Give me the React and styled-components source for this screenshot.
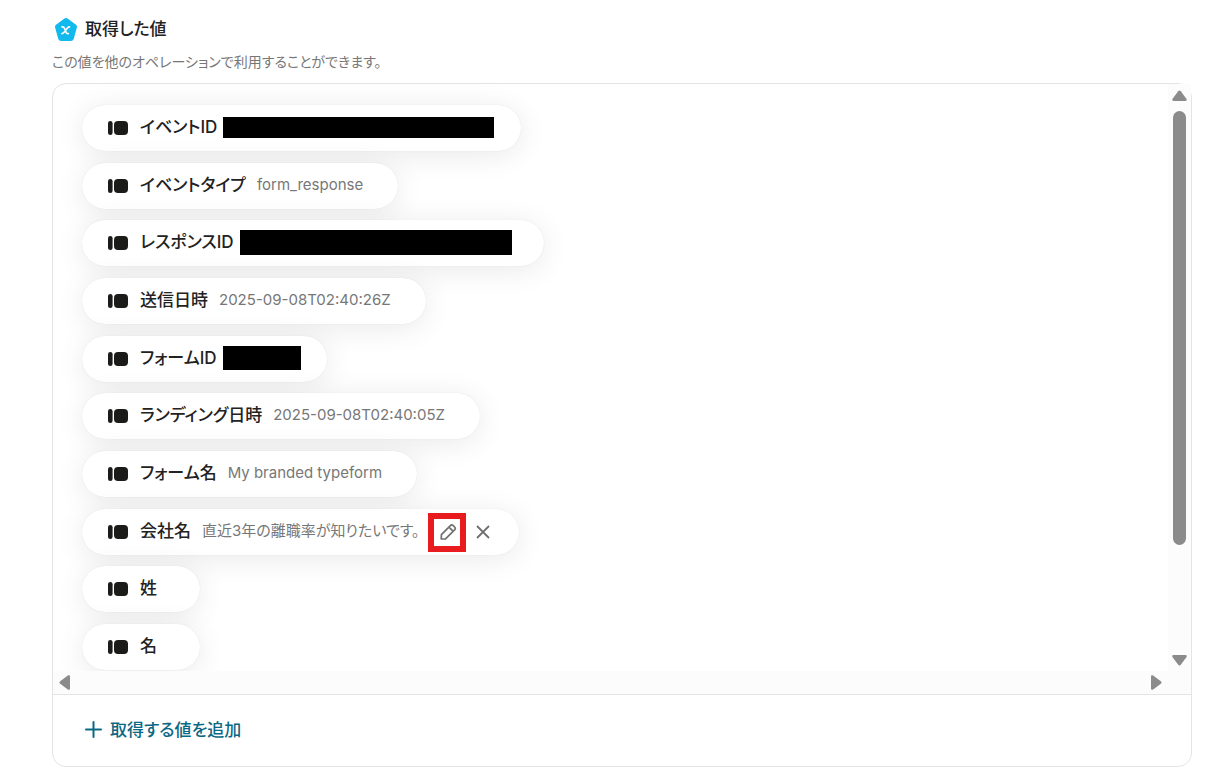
import React from "react";
import styled, { createGlobalStyle } from "styled-components";

const GlobalStyle = createGlobalStyle`
  * {
    box-sizing: border-box;
  }

  body {
    margin: 0;
    background: #fff;
    color: #222;
    font-family: Inter, "Noto Sans CJK JP", sans-serif;
    font-feature-settings: "palt";
  }
`;

const Page = styled.main`
  padding: 16px 27px 17px 52px;
`;

const Header = styled.header`
  display: flex;
  align-items: center;
  gap: 7px;
  height: 26px;
  padding-left: 2px;
`;

const Title = styled.h1`
  margin: 0;
  font-size: 17px;
  line-height: 26px;
  font-weight: 500;
`;

const Description = styled.p`
  margin: 10px 0 11px;
  color: #777;
  font-size: 14px;
  line-height: 20px;
`;

const Panel = styled.section`
  border: 1px solid #e4e4e4;
  border-radius: 14px;
`;

const Scroller = styled.div`
  display: grid;
  grid-template-columns: 1fr 23px;
  grid-template-rows: 587px 23px;
`;

const List = styled.ul`
  display: flex;
  flex-direction: column;
  align-items: flex-start;
  justify-content: space-between;
  min-width: 0;
  margin: 0;
  padding: 21px 29px 1px;
  overflow: hidden;
  list-style: none;
`;

const Pill = styled.li`
  display: flex;
  align-items: center;
  height: 46px;
  padding: 0 33px 0 26px;
  border-radius: 23px;
  background: #fff;
  box-shadow: 0 0 1px rgba(0, 0, 0, 0.12), 0 4px 30px rgba(0, 0, 0, 0.09);
  white-space: nowrap;
`;

const Label = styled.span`
  margin: 0 10px 2px 12px;
  font-size: 17px;
  line-height: 26px;
  font-weight: 500;
`;

const Value = styled.span`
  margin: 0 2px 2px 1px;
  color: #777;
  font-size: 15px;
  line-height: 24px;
`;

const Hidden = styled.span`
  position: relative;
  width: ${({ $space }) => $space}px;
  height: ${({ $height }) => $height}px;
  margin-bottom: 2px;

  &::after {
    content: "";
    position: absolute;
    top: 0;
    left: -4px;
    width: ${({ $width }) => $width}px;
    height: 100%;
    background: #000;
  }
`;

const Actions = styled.span`
  display: flex;
  align-items: center;
  gap: 11px;
  margin: 0 -9px 0 15px;
`;

const IconButton = styled.button`
  position: relative;
  display: grid;
  place-items: center;
  width: 24px;
  height: 24px;
  padding: 0;
  border: none;
  background: none;
  color: #707070;
  cursor: pointer;
`;

const Marker = styled.span`
  position: absolute;
  top: -7px;
  left: -8px;
  width: 38px;
  height: 39px;
  border: 6px solid #e81b1f;
  pointer-events: none;
`;

const Track = styled.div`
  display: flex;
  flex-direction: ${({ $vertical }) => ($vertical ? "column" : "row")};
  align-items: center;
  gap: 10px;
  padding: ${({ $vertical }) => ($vertical ? "6px 0 5px" : "0 6px")};
  background: #fcfcfc;
  color: #8b8b8b;

  svg:last-child {
    margin-${({ $vertical }) => ($vertical ? "top" : "left")}: auto;
  }
`;

const Thumb = styled.div`
  width: 13px;
  height: 434px;
  border-radius: 7px;
  background: #8b8b8b;
`;

const Corner = styled.div`
  background: #fcfcfc;
`;

const Footer = styled.footer`
  display: flex;
  align-items: center;
  height: 72px;
  padding: 0 32px 2px;
  border-top: 1px solid #e4e4e4;
`;

const AddButton = styled.button`
  display: flex;
  align-items: center;
  gap: 8px;
  padding: 0;
  border: none;
  background: none;
  color: #0b6884;
  font: inherit;
  font-feature-settings: inherit;
  font-size: 17px;
  line-height: 26px;
  font-weight: 500;
  cursor: pointer;
`;

const items = [
  { label: "イベントID", hidden: { space: 261, width: 271, height: 21 } },
  { label: "イベントタイプ", value: "form_response" },
  { label: "レスポンスID", hidden: { space: 267, width: 272, height: 25 } },
  { label: "送信日時", value: "2025-09-08T02:40:26Z" },
  { label: "フォームID", hidden: { space: 67, width: 78, height: 24 } },
  { label: "ランディング日時", value: "2025-09-08T02:40:05Z" },
  { label: "フォーム名", value: "My branded typeform" },
  { label: "会社名", value: "直近3年の離職率が知りたいです。", active: true },
  { label: "姓" },
  { label: "名" },
];

function VariableIcon() {
  return (
    <svg width="24" height="24" viewBox="0 -1 24 24" aria-hidden="true">
      <path
        d="M10.4.6a3 3 0 0 1 3.2 0l8.400 6.100a2.600 2.600 0 0 1 .9 2.900l-3.200 11.400a3 3 0 0 1-2.800 2H7.100a3 3 0 0 1-2.800-2L1.100 9.600A2.600 2.600 0 0 1 2 6.700z"
        fill="#12b9ec"
      />
      <path
        d="M8 8.900h.8c.8 0 1.200.4 1.500 1.100l1.900 4.500c.3.700.7 1.100 1.500 1.100h.7M15.600 8.900c-1 0-1.500.3-2.100 1l-3.600 4.700c-.6.700-1.100 1-2.100 1"
        fill="none"
        stroke="#fff"
        strokeWidth="1.600"
        strokeLinecap="round"
      />
    </svg>
  );
}

function FormIcon() {
  return (
    <svg width="20" height="14" viewBox="0 0 20 14" aria-hidden="true">
      <rect width="4.600" height="14" rx="2.300" fill="#1b1b19" />
      <rect x="6" width="14" height="14" rx="4" fill="#1b1b19" />
    </svg>
  );
}

function PencilIcon() {
  return (
    <svg
      width="18"
      height="18"
      viewBox="0 0 18 18"
      fill="none"
      stroke="currentColor"
      strokeWidth="1.700"
      strokeLinejoin="round"
      aria-hidden="true"
    >
      <path d="M2.200 16l.2-4.300 9-9.100a2 2 0 0 1 2.800 0l1.400 1.400a2 2 0 0 1 0 2.800l-9.100 9zM10 4.200l3.900 3.900" />
    </svg>
  );
}

function CloseIcon() {
  return (
    <svg width="14" height="14" viewBox="0 0 14 14" aria-hidden="true">
      <path d="M1 1l12 12M13 1L1 13" stroke="currentColor" strokeWidth="1.800" />
    </svg>
  );
}

function PlusIcon() {
  return (
    <svg width="17" height="17" viewBox="0 0 17 17" aria-hidden="true">
      <path
        d="M8.500 1v15M1 8.500h15"
        stroke="currentColor"
        strokeWidth="2"
        strokeLinecap="round"
      />
    </svg>
  );
}

function Arrow({ direction }) {
  const shapes = {
    up: "M6.200 1.200a1.700 1.700 0 0 1 2.600 0l5.600 7.600c.7 1 .3 2.200-1 2.200H1.600C.3 11-.1 9.800.6 8.800z",
    down: "M6.200 9.800a1.700 1.700 0 0 0 2.600 0l5.600-7.600c.7-1 .3-2.200-1-2.200H1.600C.3 0-.1 1.200.6 2.200z",
    left: "M1.200 6.200a1.700 1.700 0 0 0 0 2.600l7.600 5.600c1 .7 2.200.3 2.200-1V1.600C11 .3 9.800-.1 8.800.6z",
    right: "M9.800 6.200a1.700 1.700 0 0 1 0 2.600l-7.600 5.600c-1 .7-2.200.3-2.200-1V1.600C0 .3 1.200-.1 2.200.6z",
  };
  const upright = direction === "up" || direction === "down";
  const width = upright ? 15 : 11;
  const height = upright ? 11 : 15;

  return (
    <svg
      width={width}
      height={height}
      viewBox={`0 0 ${width} ${height}`}
      aria-hidden="true"
    >
      <path d={shapes[direction]} fill="currentColor" />
    </svg>
  );
}

function Item({ label, value, hidden, active }) {
  return (
    <Pill>
      <FormIcon />
      <Label>{label}</Label>
      {value && <Value>{value}</Value>}
      {hidden && (
        <Hidden
          $space={hidden.space}
          $width={hidden.width}
          $height={hidden.height}
        />
      )}
      {active && (
        <Actions>
          <IconButton type="button" aria-label="編集">
            <PencilIcon />
            <Marker />
          </IconButton>
          <IconButton type="button" aria-label="削除">
            <CloseIcon />
          </IconButton>
        </Actions>
      )}
    </Pill>
  );
}

function App() {
  return (
    <>
      <GlobalStyle />
      <Page>
        <Header>
          <VariableIcon />
          <Title>取得した値</Title>
        </Header>
        <Description>
          この値を他のオペレーションで利用することができます。
        </Description>
        <Panel>
          <Scroller>
            <List>
              {items.map((item) => (
                <Item key={item.label} {...item} />
              ))}
            </List>
            <Track $vertical>
              <Arrow direction="up" />
              <Thumb />
              <Arrow direction="down" />
            </Track>
            <Track>
              <Arrow direction="left" />
              <Arrow direction="right" />
            </Track>
            <Corner />
          </Scroller>
          <Footer>
            <AddButton type="button">
              <PlusIcon />
              取得する値を追加
            </AddButton>
          </Footer>
        </Panel>
      </Page>
    </>
  );
}

export default App;
